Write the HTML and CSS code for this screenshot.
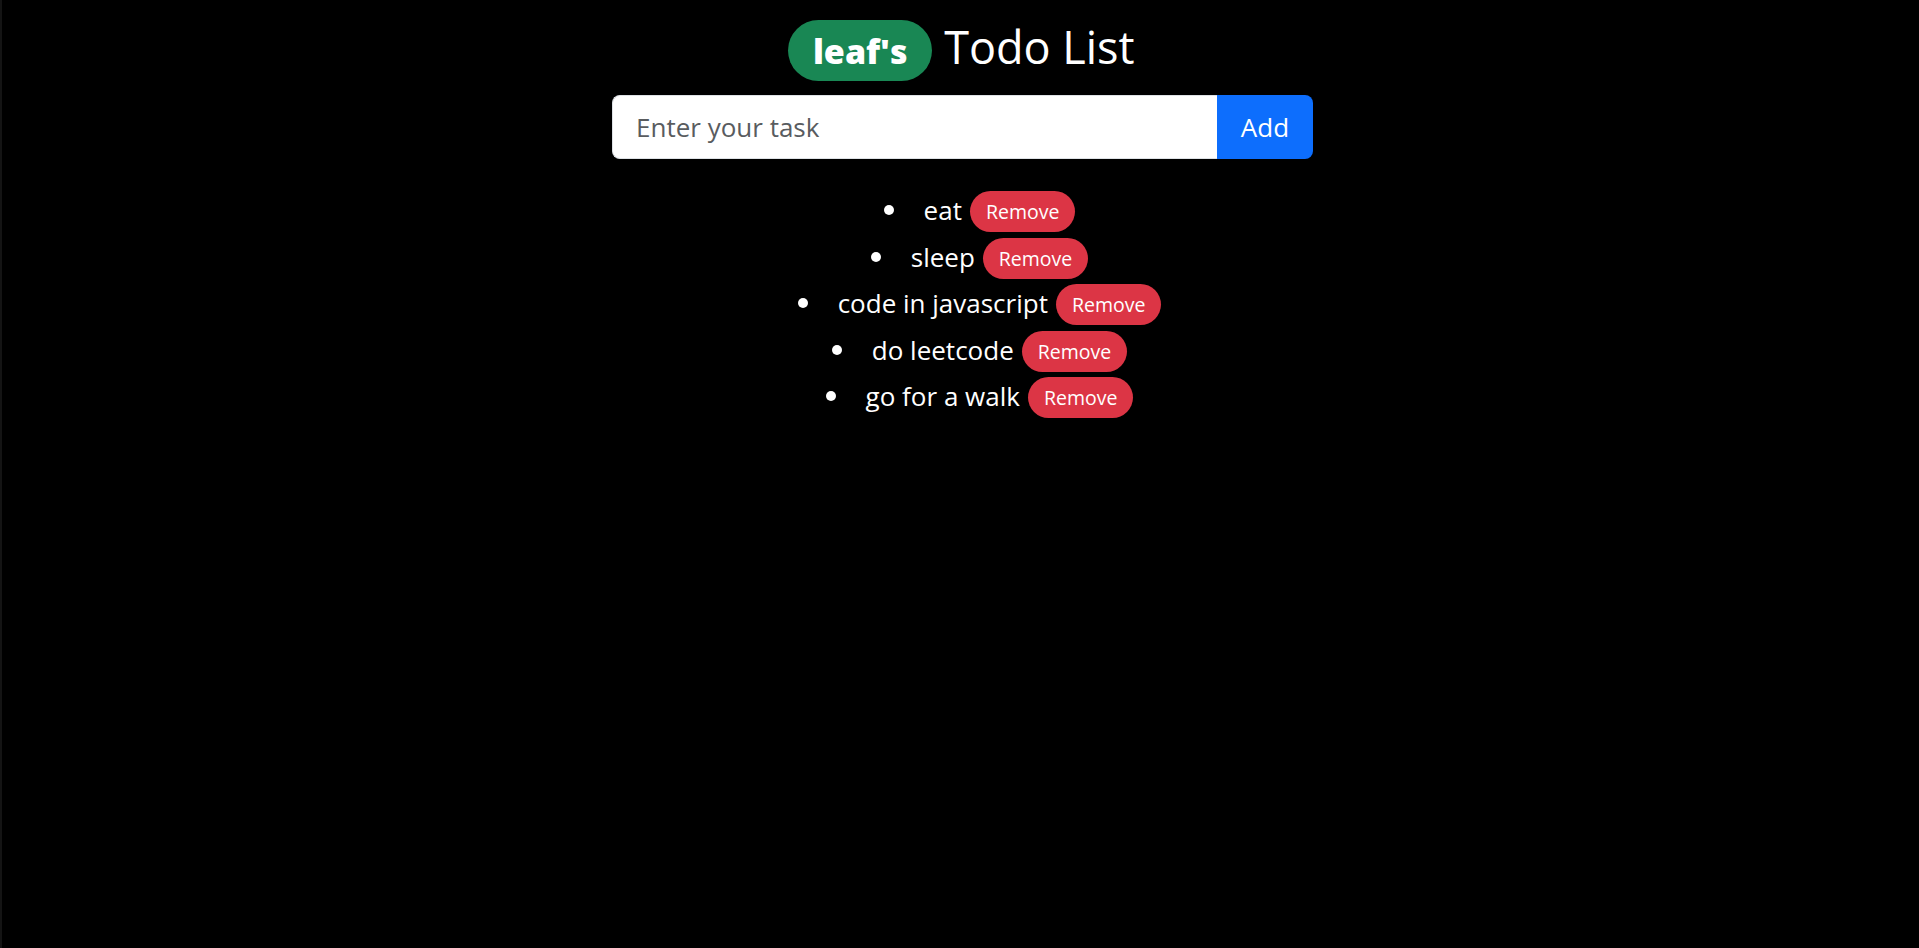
FILE: index.html
```html
<!DOCTYPE html>
<html lang="en">
<head>
<meta charset="utf-8">
<title>leaf's Todo List</title>
<link rel="stylesheet" href="styles.css">
</head>
<body>
<main class="app">
  <h1 class="title"><span class="badge">leaf's</span><span class="title-text">Todo List</span></h1>
  <form class="input-group">
    <input class="task-input" type="text" placeholder="Enter your task">
    <button class="add-btn" type="button">Add</button>
  </form>
  <ul class="tasks">
    <li class="task">eat<button class="remove-btn" type="button">Remove</button></li>
    <li class="task">sleep<button class="remove-btn" type="button">Remove</button></li>
    <li class="task">code in javascript<button class="remove-btn" type="button">Remove</button></li>
    <li class="task">do leetcode<button class="remove-btn" type="button">Remove</button></li>
    <li class="task">go for a walk<button class="remove-btn" type="button">Remove</button></li>
  </ul>
</main>
</body>
</html>
```

FILE: styles.css
```css
* { box-sizing: border-box; }

html, body {
  margin: 0;
  padding: 0;
  height: 100%;
}

body {
  background: #000;
  border-left: 2px solid #141414;
  color: #fff;
  font-family: "Open Sans", "Noto Sans", "Liberation Sans", sans-serif;
}

.app {
  display: flex;
  flex-direction: column;
  align-items: center;
  padding-top: 19.5px;
}

.title {
  display: flex;
  align-items: baseline;
  gap: 12px;
  margin: 0 0 0 2px;
  font-size: 45px;
  font-weight: 400;
  line-height: 1.2;
}

.badge {
  display: inline-block;
  background: #198754;
  color: #fff;
  font-size: 34px;
  font-weight: 800;
  line-height: 1;
  padding: 13.5px 24.5px;
  border-radius: 40px;
}

.input-group {
  display: flex;
  width: 701px;
  height: 64px;
  margin: 14px 0 0 4px;
}

.task-input {
  flex: 1;
  min-width: 0;
  height: 100%;
  border: 1px solid #dee2e6;
  border-right: none;
  border-radius: 8px 0 0 8px;
  padding: 0 23px;
  font-family: inherit;
  font-size: 26px;
  color: #212529;
  background: #fff;
  outline: none;
}

.task-input::placeholder {
  color: #595c5f;
}

.add-btn {
  width: 96px;
  height: 100%;
  border: none;
  border-radius: 0 8px 8px 0;
  background: #0d6efd;
  color: #fff;
  font-family: inherit;
  font-size: 26px;
  padding: 0;
}

.tasks {
  list-style: none;
  margin: 28px 0 0;
  padding: 0 0 0 38px;
  align-self: stretch;
  text-align: center;
}

.task {
  font-size: 26px;
  line-height: 46.5px;
}

.task::before {
  content: "";
  display: inline-block;
  width: 10px;
  height: 10px;
  border-radius: 50%;
  background: #fff;
  margin-right: 30px;
  vertical-align: 5px;
}

.remove-btn {
  display: inline-block;
  margin-left: 8px;
  height: 41px;
  padding: 0 16px;
  border: none;
  border-radius: 21px;
  background: #dc3545;
  color: #fff;
  font-family: inherit;
  font-size: 19.5px;
  line-height: 41px;
  vertical-align: 1px;
}
```
